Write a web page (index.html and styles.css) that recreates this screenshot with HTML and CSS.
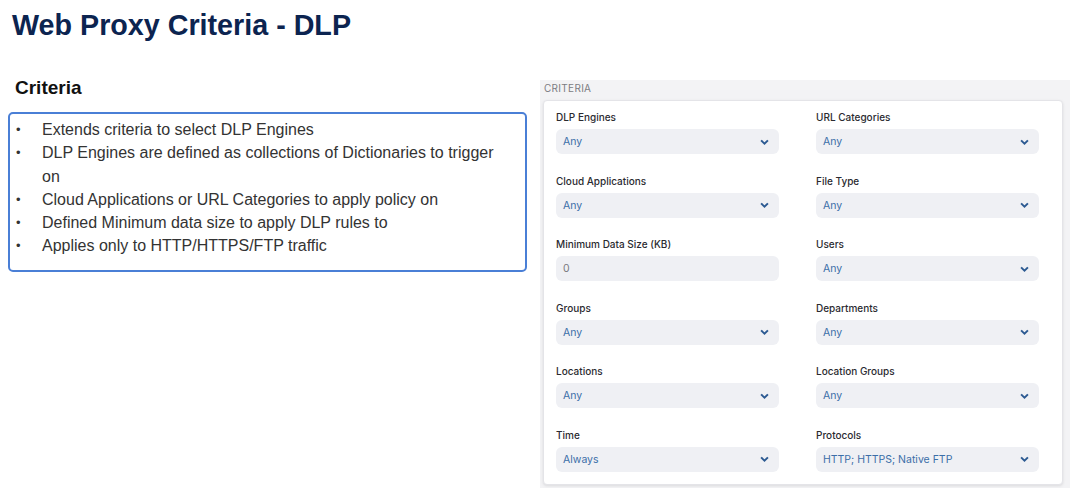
FILE: index.html
```html
<!DOCTYPE html>
<html>
  <head>
  <meta charset='utf-8'>
  <link rel="stylesheet" href="styles.css">
  </head>

  <body>
  <h1 class="title">Web Proxy Criteria - DLP</h1>

  <div class="main">
    <div class="notes">
      <h2>Criteria</h2>
      <ul class="points">
        <li>Extends criteria to select DLP Engines</li>
        <li>DLP Engines are defined as collections of Dictionaries to trigger on</li>
        <li>Cloud Applications or URL Categories to apply policy on</li>
        <li>Defined Minimum data size to apply DLP rules to</li>
        <li>Applies only to HTTP/HTTPS/FTP traffic</li>
      </ul>
    </div>

    <div class="panel">
      <div class="panel-label">CRITERIA</div>
      <div class="card">
        <div class="field">
          <label>DLP Engines</label>
          <div class="select"><span>Any</span><svg viewBox="0 0 10 6"><path d="M1.2 1.2l3.8 3.6 3.8-3.6"/></svg></div>
        </div>
        <div class="field">
          <label>URL Categories</label>
          <div class="select"><span>Any</span><svg viewBox="0 0 10 6"><path d="M1.2 1.2l3.8 3.6 3.8-3.6"/></svg></div>
        </div>
        <div class="field">
          <label>Cloud Applications</label>
          <div class="select"><span>Any</span><svg viewBox="0 0 10 6"><path d="M1.2 1.2l3.8 3.6 3.8-3.6"/></svg></div>
        </div>
        <div class="field">
          <label>File Type</label>
          <div class="select"><span>Any</span><svg viewBox="0 0 10 6"><path d="M1.2 1.2l3.8 3.6 3.8-3.6"/></svg></div>
        </div>
        <div class="field">
          <label>Minimum Data Size (KB)</label>
          <div class="select input"><span>0</span></div>
        </div>
        <div class="field">
          <label>Users</label>
          <div class="select"><span>Any</span><svg viewBox="0 0 10 6"><path d="M1.2 1.2l3.8 3.6 3.8-3.6"/></svg></div>
        </div>
        <div class="field">
          <label>Groups</label>
          <div class="select"><span>Any</span><svg viewBox="0 0 10 6"><path d="M1.2 1.2l3.8 3.6 3.8-3.6"/></svg></div>
        </div>
        <div class="field">
          <label>Departments</label>
          <div class="select"><span>Any</span><svg viewBox="0 0 10 6"><path d="M1.2 1.2l3.8 3.6 3.8-3.6"/></svg></div>
        </div>
        <div class="field">
          <label>Locations</label>
          <div class="select"><span>Any</span><svg viewBox="0 0 10 6"><path d="M1.2 1.2l3.8 3.6 3.8-3.6"/></svg></div>
        </div>
        <div class="field">
          <label>Location Groups</label>
          <div class="select"><span>Any</span><svg viewBox="0 0 10 6"><path d="M1.2 1.2l3.8 3.6 3.8-3.6"/></svg></div>
        </div>
        <div class="field">
          <label>Time</label>
          <div class="select"><span>Always</span><svg viewBox="0 0 10 6"><path d="M1.2 1.2l3.8 3.6 3.8-3.6"/></svg></div>
        </div>
        <div class="field">
          <label>Protocols</label>
          <div class="select"><span>HTTP; HTTPS; Native FTP</span><svg viewBox="0 0 10 6"><path d="M1.2 1.2l3.8 3.6 3.8-3.6"/></svg></div>
        </div>
      </div>
    </div>
  </div>
  </body>
</html>
```

FILE: styles.css
```css
body {
  margin: 0;
  font-family: "Liberation Sans", Arial, sans-serif;
  background: #fff;
}

.title {
  margin: 0;
  padding: 8px 0 0 12px;
  font-size: 28.7px;
  line-height: 34px;
  font-weight: bold;
  color: #0c2450;
}

.main {
  display: flex;
  align-items: flex-start;
  margin-top: 35px;
}

.notes {
  width: 519px;
  margin-left: 8px;
  margin-right: 13px;
}

.notes h2 {
  margin: 0 0 13px 7px;
  font-size: 19px;
  line-height: 22px;
  color: #111;
}

.points {
  margin: 0;
  padding: 4px 14px 0 6px;
  border: 2px solid #4a7fd6;
  border-radius: 5px;
  list-style: none;
  box-sizing: border-box;
  height: 160px;
}

.points li {
  display: grid;
  grid-template-columns: 26px 1fr;
  font-size: 16px;
  line-height: 23.3px;
  color: #333;
}

.points li::before {
  content: "\2022";
  font-size: 13px;
}

.panel {
  width: 530px;
  margin-top: 3px;
  padding: 1px 7px 3px 3px;
  background: #f3f3f5;
  box-sizing: border-box;
}

.panel-label {
  font-family: Inter, "Liberation Sans", sans-serif;
  font-size: 10px;
  line-height: 14px;
  letter-spacing: 0.3px;
  color: #7c7c82;
  margin: 0 0 5px 1px;
}

.card {
  display: grid;
  grid-template-columns: 223px 223px;
  column-gap: 37px;
  row-gap: 19.5px;
  padding: 9px 12px 12.5px 12px;
  background: #fff;
  border: 1px solid #e4e4e8;
  border-radius: 4px;
  box-shadow: 0 1px 3px rgba(0, 0, 0, 0.1);
}

.field label {
  display: block;
  font-family: Inter, "Liberation Sans", sans-serif;
  font-size: 10px;
  line-height: 14px;
  font-weight: 500;
  color: #2a2a30;
  margin-bottom: 5px;
}

.select {
  display: flex;
  align-items: center;
  justify-content: space-between;
  height: 25px;
  padding: 0 7px 0 7px;
  background: #eff0f4;
  border-radius: 6px;
  font-family: Inter, "Liberation Sans", sans-serif;
  font-size: 10.5px;
  color: #3b6ea8;
}

.select svg {
  width: 9px;
  height: 6px;
  margin-right: 3px;
  fill: none;
  stroke: #2c5a92;
  stroke-width: 2.2;
}

.select.input {
  color: #7a7a80;
}
```
